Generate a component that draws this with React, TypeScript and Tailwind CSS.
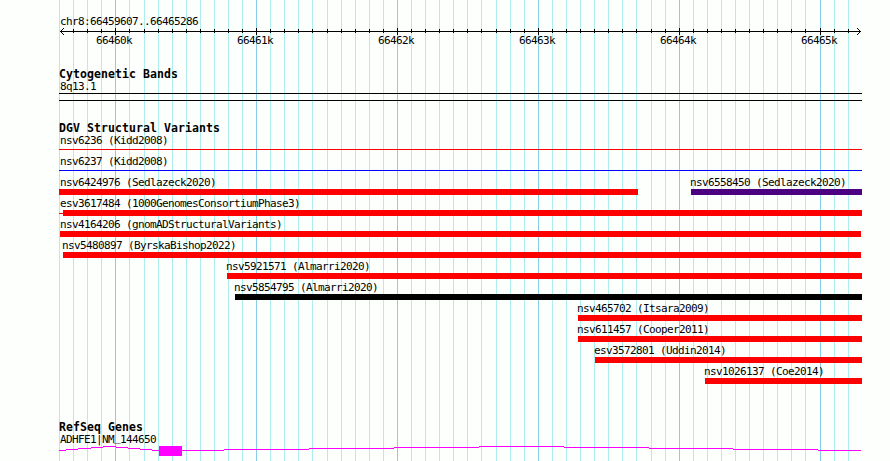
import React from 'react';

const minorLines = [
  59, 73, 87, 101, 129, 144, 158, 172, 186, 200, 214, 228, 242, 270, 284, 298,
  312, 327, 341, 355, 369, 383, 411, 425, 439, 453, 467, 481, 496, 510, 524,
  552, 566, 580, 594, 608, 622, 636, 651, 665, 693, 707, 721, 735, 749, 763,
  777, 791, 805, 834, 848,
];
const majorLines = [115, 256, 397, 538, 679, 820];

const Grid = () => (
  <svg
    className="absolute inset-0"
    width="890"
    height="461"
    shapeRendering="crispEdges"
  >
    {minorLines.map((x) => (
      <rect key={x} x={x} y="0" width="1" height="461" fill="#afeeee" />
    ))}
    {majorLines.map((x) => (
      <rect key={x} x={x} y="0" width="1" height="461" fill="#87ceeb" />
    ))}
  </svg>
);

const Label = ({ text }: { text: React.ReactNode }) => (
  <div className="h-[13px] whitespace-pre text-[11px] leading-[13px] tracking-[-0.622px]">
    {text}
  </div>
);

const Title = ({ text }: { text: string }) => (
  <div className="h-[13px] whitespace-pre pt-px text-[11.5px] font-bold leading-[13px] tracking-[0.077px]">
    {text}
  </div>
);

const Axis = () => (
  <>
    <svg
      className="-ml-[59px] block h-[6px] w-[890px] overflow-visible"
      viewBox="0 28 890 6"
      shapeRendering="crispEdges"
    >
      <rect x="60" y="31" width="801" height="1" />
      {minorLines.slice(1).map((x) => (
        <rect key={x} x={x} y="29" width="1" height="4" />
      ))}
      {majorLines.map((x) => (
        <rect key={x} x={x} y="28" width="1" height="7" />
      ))}
      {[1, 2, 3].map((i) => (
        <g key={i}>
          <rect x={60 + i} y={31 - i} width="1" height="1" />
          <rect x={60 + i} y={31 + i} width="1" height="1" />
          <rect x={860 - i} y={31 - i} width="1" height="1" />
          <rect x={860 - i} y={31 + i} width="1" height="1" />
        </g>
      ))}
    </svg>
    <div className="ml-[37px] flex">
      {['66460k', '66461k', '66462k', '66463k', '66464k', '66465k'].map((t) => (
        <div key={t} className="w-[141px] shrink-0">
          <Label text={t} />
        </div>
      ))}
    </div>
  </>
);

const Row = ({ children }: { children: React.ReactNode }) => (
  <div className="flex h-[21px] w-[803px] items-start">{children}</div>
);

type BarProps = { text: string; color: string; box: string; shift?: string };

const Bar = ({ text, color, box, shift = '-ml-px' }: BarProps) => (
  <div className={box}>
    <div className={shift}>
      <Label text={text} />
    </div>
    <div className={`h-[6px] ${color}`} />
  </div>
);

const Line = ({ text, color }: { text: string; color: string }) => (
  <div className="w-full">
    <div className="ml-px">
      <Label text={text} />
    </div>
    <div className={`mt-[2px] h-px ${color}`} />
  </div>
);

// [from, to, y]
const intron = [
  [59, 66, 450],
  [66, 78, 449],
  [78, 91, 448],
  [91, 103, 447],
  [103, 116, 446],
  [116, 128, 447],
  [128, 140, 448],
  [140, 152, 449],
  [152, 159, 450],
  [182, 224, 450],
  [224, 309, 449],
  [309, 394, 448],
  [394, 479, 447],
  [479, 564, 446],
  [564, 649, 447],
  [649, 733, 448],
  [733, 818, 449],
  [818, 861, 450],
];

const Gene = () => (
  <svg
    className="-ml-[59px] block h-[15px] w-[890px]"
    viewBox="0 446 890 15"
    fill="#ff00ff"
    shapeRendering="crispEdges"
  >
    {intron.map(([from, to, y]) => (
      <rect key={from} x={from} y={y} width={to - from} height="1" />
    ))}
    <rect x="159" y="446" width="23" height="10" />
  </svg>
);

const App = () => (
  <div className="relative h-[461px] w-[890px] overflow-hidden bg-[#fdfffc] font-['DejaVu_Sans_Mono',monospace] text-black">
    <Grid />
    <div className="relative pl-[59px] pt-[15px]">
      <div className="ml-px">
        <Label text="chr8:66459607..66465286" />
      </div>
      <Axis />

      <div className="mt-5">
        <Title text="Cytogenetic Bands" />
        <div className="ml-px">
          <Label text="8q13.1" />
        </div>
        <div className="h-2 w-[803px] border-y border-black" />
      </div>

      <div className="mt-5">
        <Title text="DGV Structural Variants" />
        <Row>
          <Line text="nsv6236 (Kidd2008)" color="bg-[#ff0000]" />
        </Row>
        <Row>
          <Line text="nsv6237 (Kidd2008)" color="bg-[#0000ff]" />
        </Row>
        <Row>
          <Bar text="nsv6424976 (Sedlazeck2020)" color="bg-[#ff0000]" box="w-[579px]" shift="ml-px" />
          <Bar text="nsv6558450 (Sedlazeck2020)" color="bg-[#4b0082]" box="ml-[53px] w-[171px]" />
        </Row>
        <Row>
          <div className="mt-4 h-px w-1 bg-[#ff0000]" />
          <Bar text="esv3617484 (1000GenomesConsortiumPhase3)" color="bg-[#ff0000]" box="w-[799px]" shift="-ml-[3px]" />
        </Row>
        <Row>
          <Bar text="nsv4164206 (gnomADStructuralVariants)" color="bg-[#ff0000]" box="ml-px w-[801px]" shift="ml-0" />
        </Row>
        <Row>
          <Bar text="nsv5480897 (ByrskaBishop2022)" color="bg-[#ff0000]" box="ml-1 w-[798px]" />
        </Row>
        <Row>
          <Bar text="nsv5921571 (Almarri2020)" color="bg-[#ff0000]" box="ml-[168px] w-[635px]" />
        </Row>
        <Row>
          <Bar text="nsv5854795 (Almarri2020)" color="bg-black" box="ml-[176px] w-[627px]" />
        </Row>
        <Row>
          <Bar text="nsv465702 (Itsara2009)" color="bg-[#ff0000]" box="ml-[519px] w-[284px]" />
        </Row>
        <Row>
          <Bar text="nsv611457 (Cooper2011)" color="bg-[#ff0000]" box="ml-[519px] w-[284px]" />
        </Row>
        <Row>
          <Bar text="esv3572801 (Uddin2014)" color="bg-[#ff0000]" box="ml-[536px] w-[267px]" />
        </Row>
        <Row>
          <Bar text="nsv1026137 (Coe2014)" color="bg-[#ff0000]" box="ml-[646px] w-[157px]" />
        </Row>
      </div>

      <div className="mt-[34px]">
        <Title text="RefSeq Genes" />
        <div className="ml-px">
          {/* the underscore is lifted so it stays clear of the intron line */}
          <Label
            text={
              <>
                ADHFE1|NM<span className="relative -top-[2px]">_</span>144650
              </>
            }
          />
        </div>
        <Gene />
      </div>
    </div>
  </div>
);

export default App;
